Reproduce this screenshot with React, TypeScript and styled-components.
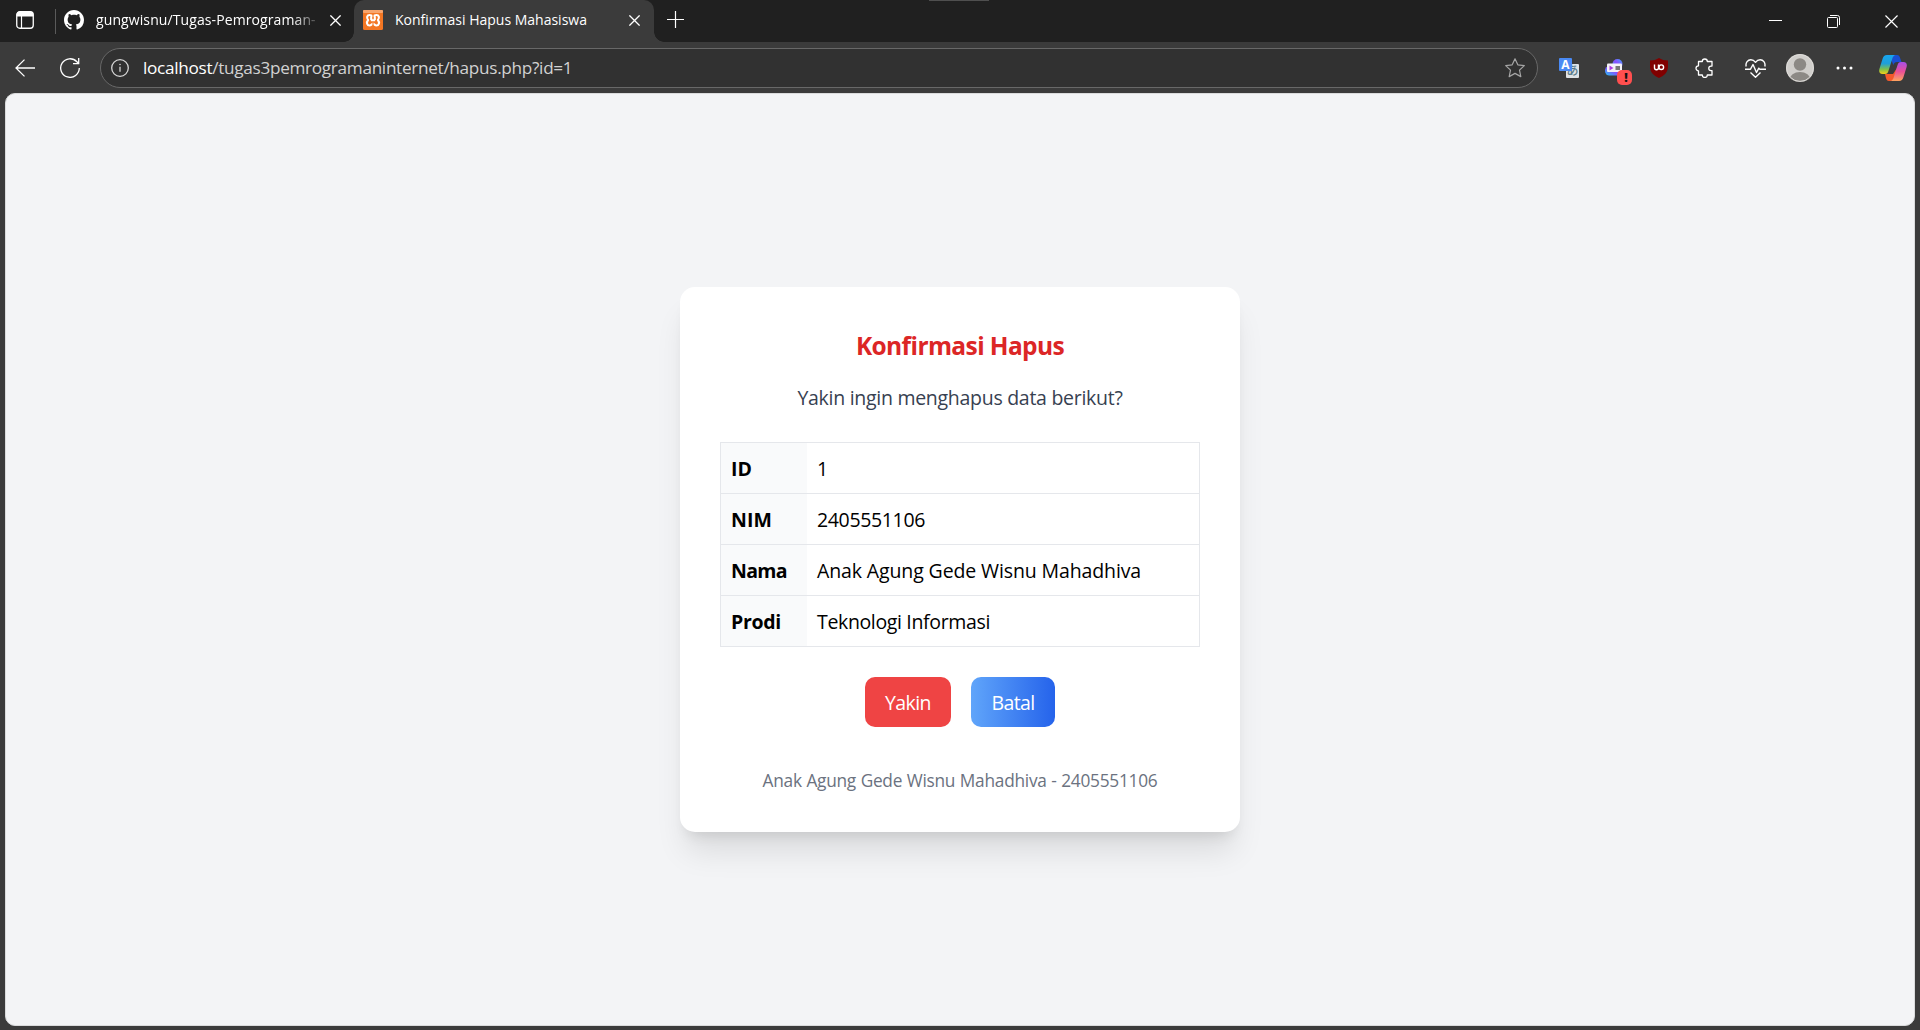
import React from "react";
import styled, { createGlobalStyle } from "styled-components";

const Global = createGlobalStyle`
  *, *::before, *::after { box-sizing: border-box; }
  body { margin: 0; background: #3b3b3b; font-family: "Open Sans", "Noto Sans", sans-serif; }
  svg { display: block; flex: none; }
`;

const Window = styled.div`
  width: 1920px;
  height: 1030px;
  display: flex;
  flex-direction: column;
  background: #3b3b3b;
  overflow: hidden;
`;

const TabStrip = styled.header`
  position: relative;
  height: 42px;
  display: flex;
  align-items: flex-start;
  background: #202020;
`;

const DragHandle = styled.span`
  position: absolute;
  top: 0;
  left: 929px;
  width: 60px;
  height: 1px;
  background: #4f4f4f;
`;

const TabActions = styled.div`
  width: 55px;
  height: 42px;
  padding: 11px 0 0 16px;
`;

const TabDivider = styled.span`
  width: 1px;
  height: 25px;
  margin-top: 9px;
  background: #5a5a5a;
`;

const Tab = styled.div<{ $active?: boolean; $width: number; $pad: string }>`
  position: relative;
  width: ${(p) => p.$width}px;
  height: 42px;
  padding: ${(p) => p.$pad};
  display: flex;
  align-items: center;
  color: #fff;
  background: ${(p) => (p.$active ? "#3b3b3b" : "transparent")};
  border-radius: 10px 10px 0 0;

  &::before, &::after {
    content: ${(p) => (p.$active ? '""' : "none")};
    position: absolute;
    bottom: 0;
    width: 10px;
    height: 10px;
  }
  &::before { left: -10px; background: radial-gradient(circle at 0 0, transparent 9.5px, #3b3b3b 10px); }
  &::after { right: -10px; background: radial-gradient(circle at 100% 0, transparent 9.5px, #3b3b3b 10px); }
`;

const TabTitle = styled.span<{ $fade?: boolean; $spacing: number }>`
  flex: 1;
  min-width: 0;
  margin: 0 8px 0 12px;
  white-space: nowrap;
  font-size: 14px;
  line-height: 20px;
  letter-spacing: ${(p) => p.$spacing}px;
  mask-image: ${(p) => (p.$fade ? "linear-gradient(to right, #000 calc(100% - 30px), transparent)" : "none")};
`;

const NewTab = styled.div`
  padding: 11px 0 0 13px;
`;

const WindowControls = styled.div`
  margin-left: auto;
  display: flex;
  gap: 45px;
  padding: 15px 22px 0 0;
`;

const Toolbar = styled.nav`
  height: 51px;
  display: flex;
  align-items: center;
  padding: 1px 13px 0 15px;
`;

const Slot = styled.span<{ $gap: number }>`
  display: flex;
  margin-left: ${(p) => p.$gap}px;
`;

const AddressBar = styled.div`
  width: 1438px;
  flex: none;
  height: 40px;
  margin-left: 20px;
  padding: 0 12px 0 10px;
  display: flex;
  align-items: center;
  justify-content: space-between;
  background: #313131;
  border: 1px solid #686868;
  border-radius: 20px;
`;

const Url = styled.span`
  flex: 1;
  margin-left: 14px;
  font-size: 17.2px;
  line-height: 24px;
  letter-spacing: -0.31px;
  color: #d2d2d2;
  b { font-weight: 400; color: #fff; }
`;

const ToolDivider = styled.span`
  width: 1px;
  height: 20px;
  margin-left: 15px;
  background: #636363;
`;

const Page = styled.main`
  flex: 1;
  margin: 0 5px 4px;
  display: flex;
  align-items: center;
  justify-content: center;
  background: #f3f4f6;
  border: 1px solid #dadbdc;
  border-radius: 10px;
`;

const Card = styled.section`
  width: 560px;
  height: 545px;
  padding: 40px;
  display: flex;
  flex-direction: column;
  align-items: center;
  background: #fff;
  border-radius: 15px;
  box-shadow: 0 25px 31.25px -6.25px rgba(0, 0, 0, 0.1), 0 10px 12.5px -7.5px rgba(0, 0, 0, 0.1);
`;

const Title = styled.h1`
  margin: 1px 0 14px;
  font-size: 24.5px;
  line-height: 35px;
  font-weight: 700;
  letter-spacing: -0.6px;
  color: #dc2626;
  white-space: nowrap;
`;

const Question = styled.p`
  margin: 6px 0 29px;
  font-size: 19.5px;
  line-height: 30px;
  letter-spacing: -0.28px;
  color: #374151;
  white-space: nowrap;
`;

const Table = styled.div`
  width: 480px;
  border: 1px solid #e5e7eb;
`;

const Row = styled.div`
  height: 51px;
  display: flex;
  font-size: 19.5px;
  line-height: 52px;
  color: #000;
  white-space: nowrap;
  border-bottom: 1px solid #e5e7eb;
  &:last-child { height: 50px; border-bottom: 0; }
`;

const Label = styled.span<{ $spacing: number }>`
  width: 86px;
  padding-left: 10px;
  font-weight: 700;
  letter-spacing: ${(p) => p.$spacing}px;
  background: #f9fafb;
`;

const Value = styled.span<{ $spacing: number }>`
  padding-left: 10px;
  letter-spacing: ${(p) => p.$spacing}px;
`;

const Actions = styled.div`
  display: flex;
  gap: 20px;
  margin-top: 30px;
`;

const Button = styled.button<{ $bg: string; $width: number }>`
  width: ${(p) => p.$width}px;
  height: 50px;
  padding: 1px 0 0;
  border: 0;
  border-radius: 10px;
  background: ${(p) => p.$bg};
  color: #fff;
  font: 400 19.5px/30px "Open Sans", "Noto Sans", sans-serif;
  letter-spacing: -0.6px;
`;

const Footer = styled.footer`
  margin-top: 41px;
  font-size: 17.3px;
  line-height: 25px;
  letter-spacing: -0.26px;
  word-spacing: 0.4px;
  color: #6b7280;
  white-space: nowrap;
`;

const data = [
  { label: "ID", value: "1", labelSpacing: 0, spacing: 0 },
  { label: "NIM", value: "2405551106", labelSpacing: 0.1, spacing: -0.35 },
  { label: "Nama", value: "Anak Agung Gede Wisnu Mahadhiva", labelSpacing: -0.7, spacing: -0.12 },
  { label: "Prodi", value: "Teknologi Informasi", labelSpacing: -0.3, spacing: -0.35 },
];

const TabsIcon = () => (
  <svg width="18" height="18" viewBox="0 0 18 18" fill="none" stroke="#fff">
    <rect x=".75" y=".75" width="16.5" height="16.5" rx="3" strokeWidth="1.3" />
    <path d="M1 5V3.5A2.5 2.5 0 0 1 3.5 1h11A2.5 2.5 0 0 1 17 3.500V5z" fill="#fff" />
    <path d="M5.500 5v12" strokeWidth="1.2" />
  </svg>
);

const GithubIcon = () => (
  <svg width="20" height="20" viewBox="0 0 16 16" fill="#fff">
    <path d="M8 0C3.58 0 0 3.58 0 8c0 3.54 2.29 6.53 5.47 7.59.4.07.55-.17.55-.38 0-.19-.01-.82-.01-1.49-2.01.37-2.53-.49-2.69-.94-.09-.23-.48-.94-.82-1.13-.28-.15-.68-.52-.01-.53.63-.01 1.08.58 1.23.82.72 1.21 1.87.87 2.33.66.07-.52.28-.87.51-1.07-1.78-.2-3.64-.89-3.64-3.95 0-.87.31-1.59.82-2.15-.08-.2-.36-1.02.08-2.12 0 0 .67-.21 2.2.82.64-.18 1.32-.27 2-.27s1.36.09 2 .27c1.53-1.04 2.2-.82 2.2-.82.44 1.1.16 1.92.08 2.12.51.56.82 1.27.82 2.15 0 3.07-1.87 3.75-3.65 3.95.29.25.54.73.54 1.48 0 1.07-.01 1.93-.01 2.2 0 .21.15.46.55.38A8.01 8.01 0 0 0 16 8c0-4.42-3.58-8-8-8z" />
  </svg>
);

const XamppIcon = () => (
  <svg width="20" height="20" viewBox="0 0 20 20">
    <rect width="20" height="20" rx="1.500" fill="#f37623" />
    <rect width="20" height="3" rx="1" fill="#f8a56d" />
    <path d="M6.600 5C8 5 8.800 6 10 6S12 5 13.400 5C15.900 5 16.800 7.800 14.900 10C17 12.500 15.900 15.500 13.400 15.500C11.800 15.500 11.300 13.900 10 13.900S8.200 15.500 6.600 15.500C4.100 15.500 3 12.500 5.100 10C3.200 7.800 4.100 5 6.600 5zM7.800 10.200h4.400M8.200 6.400v3.600M11.800 6.400v3.600" fill="none" stroke="#fff" strokeWidth="2.100" strokeLinejoin="round" />
    <path d="M10 3.500v3.800M10 13v3.500" stroke="#f37623" strokeWidth="1.100" />
  </svg>
);

const CloseIcon = ({ size = 11 }: { size?: number }) => (
  <svg width={size} height={size} viewBox="0 0 11 11" fill="none" stroke="#fff" strokeWidth={size > 11 ? 1 : 1.3}>
    <path d="M.4.4l10.200 10.200M10.600.4L.4 10.600" />
  </svg>
);

const PlusIcon = () => (
  <svg width="17" height="17" viewBox="0 0 17 17" stroke="#fff" strokeWidth="1.200">
    <path d="M8.500 0v17M0 8.500h17" />
  </svg>
);

const MinimizeIcon = () => (
  <svg width="13" height="13" viewBox="0 0 13 13" stroke="#fff"><path d="M0 5.500h13" /></svg>
);

const RestoreIcon = () => (
  <svg width="13" height="13" viewBox="0 0 13 13" fill="none" stroke="#fff">
    <rect x=".5" y="2.500" width="10" height="10" rx="1" />
    <path d="M3 .5h7.500a2 2 0 0 1 2 2V10" />
  </svg>
);

const BackIcon = () => (
  <svg width="20" height="18" viewBox="0 0 20 18" fill="none" stroke="#fff" strokeWidth="1.300">
    <path d="M20 9H1M9.500.6L1 9l8.500 8.400" />
  </svg>
);

const ReloadIcon = () => (
  <svg width="20" height="20" viewBox="0 0 20 20" fill="none" stroke="#fff" strokeWidth="1.300">
    <path d="M19.300 10a9.300 9.300 0 1 1-2.400-6.200L18.500 5.500M18.700 0v5.700h-5.700" />
  </svg>
);

const InfoIcon = () => (
  <svg width="18" height="18" viewBox="0 0 18 18" fill="none" stroke="#d6d6d6" strokeWidth="1.300">
    <circle cx="9" cy="9" r="8.300" />
    <path d="M9 7.800v5" />
    <circle cx="9" cy="5.500" r=".5" fill="#d6d6d6" strokeWidth=".6" />
  </svg>
);

const StarIcon = () => (
  <svg width="20" height="20" viewBox="0 0 20 20" fill="none" stroke="#a5a5a5" strokeWidth="1.200" strokeLinejoin="round">
    <path d="M10 .8l2.800 6 6.500.8-4.800 4.500 1.300 6.500L10 15.400l-5.800 3.200 1.300-6.500L.7 7.600l6.500-.8z" />
  </svg>
);

const TranslateGlyph = styled.span<{ $front?: boolean }>`
  position: absolute;
  left: ${(p) => (p.$front ? 0 : 7)}px;
  top: ${(p) => (p.$front ? 0 : 6)}px;
  width: 13px;
  height: ${(p) => (p.$front ? 13 : 14)}px;
  border-radius: 1px;
  display: flex;
  align-items: center;
  justify-content: center;
  background: ${(p) => (p.$front ? "#4a8af4" : "#dfe3e6")};
  color: ${(p) => (p.$front ? "#fff" : "#587a89")};
  font: ${(p) => (p.$front ? "700 12px" : "500 12px")} / 1 "Open Sans", "Noto Sans CJK JP", sans-serif;
`;

const TranslateBox = styled.span`
  position: relative;
  width: 20px;
  height: 20px;
  flex: none;
  margin-left: 21px;
`;

const BotBox = styled.span`
  position: relative;
  width: 27px;
  height: 27px;
  flex: none;
  margin: 9px 0 0 26px;
`;

const AlertBadge = styled.span`
  position: absolute;
  left: 12px;
  top: 11px;
  width: 15px;
  height: 15px;
  border-radius: 5px;
  background: #ff4f4f;
  color: #111;
  font-size: 12px;
  line-height: 16px;
  font-weight: 800;
  text-align: center;
  padding-left: 3px;
`;

const BotIcon = () => (
  <svg width="20" height="18" viewBox="0 0 20 18">
    <defs>
      <linearGradient id="bot" x1="0" y1="1" x2="1" y2="0">
        <stop offset="0" stopColor="#20c6f4" />
        <stop offset=".5" stopColor="#8a4cff" />
        <stop offset="1" stopColor="#42a5ff" />
      </linearGradient>
    </defs>
    <circle cx="12.500" cy="5" r="5" fill="url(#bot)" />
    <rect x="0" y="7" width="17" height="9.500" rx="4.500" fill="url(#bot)" />
    <rect x="2" y="4.500" width="15" height="8.500" rx="1" fill="#f4f2f8" />
    <path d="M4.500 6.500v5l4-2.500z" fill="#b03ae0" />
    <path d="M10.500 7h4.500v4h-4.500z" fill="#777" />
  </svg>
);

const ShieldIcon = () => (
  <svg width="18" height="20" viewBox="0 0 18 20">
    <path d="M9 0c2.500 1.700 5.600 2.500 9 2.500v6C18 14 14.500 17.500 9 20 3.500 17.500 0 14 0 8.500v-6C3.400 2.500 6.500 1.700 9 0z" fill="#800000" />
    <path d="M4.500 6.500v3.300a2 2 0 0 0 4 0V6.500" fill="none" stroke="#fff" strokeWidth="1.400" />
    <circle cx="11.300" cy="9.200" r="2.300" fill="none" stroke="#fff" strokeWidth="1.400" />
  </svg>
);

const PuzzleIcon = () => (
  <svg width="19" height="20" viewBox="0 0 19 20" fill="none" stroke="#fff" strokeWidth="1.300" strokeLinejoin="round">
    <path d="M3.500 3.500H7.300a2.500 2.500 0 1 1 5 0H17v4.600h-1a2.200 2.200 0 0 0 0 4.500h1v4.400h-4.700a2.500 2.500 0 1 1-5 0H3.500v-4.200a2.500 2.500 0 1 1 0-5z" />
  </svg>
);

const HeartIcon = () => (
  <svg width="21" height="19" viewBox="0 0 21 19" fill="none" stroke="#fff" strokeWidth="1.400" strokeLinejoin="round">
    <path d="M1.200 7.500C.2 3.500 3 .8 5.800.8c2 0 3.500.9 4.700 2.500C11.700 1.700 13.200.8 15.200.8c2.800 0 5.600 2.700 4.600 6.700M0 10.200h5.500L8 5.500l3.500 8 2.300-4.300 1 1H21M5.500 13.500l5 4.700 5-4.700" />
  </svg>
);

const AvatarIcon = () => (
  <svg width="28" height="28" viewBox="0 0 28 28">
    <defs><clipPath id="face"><circle cx="14" cy="14" r="14" /></clipPath></defs>
    <g clipPath="url(#face)">
      <rect width="28" height="28" fill="#d0cecb" />
      <circle cx="14" cy="10.500" r="6.200" fill="#8c8985" />
      <ellipse cx="14" cy="26" rx="10.500" ry="8" fill="#8c8985" />
    </g>
    <circle cx="14" cy="14" r="13.400" fill="none" stroke="#dddbd8" strokeWidth="1" />
  </svg>
);

const DotsIcon = () => (
  <svg width="17" height="4" viewBox="0 0 17 4" fill="#fff">
    <circle cx="2" cy="2" r="1.500" /><circle cx="8.500" cy="2" r="1.500" /><circle cx="15" cy="2" r="1.500" />
  </svg>
);

const CopilotIcon = () => (
  <svg width="28" height="26" viewBox="0 0 28 26">
    <defs>
      <linearGradient id="cpL" x1="0" y1="0" x2="0" y2="1">
        <stop offset="0" stopColor="#17a5f0" /><stop offset=".45" stopColor="#1f9fd8" />
        <stop offset=".75" stopColor="#7fc04a" /><stop offset="1" stopColor="#f5d018" />
      </linearGradient>
      <linearGradient id="cpR" x1="0" y1="0" x2="0" y2="1">
        <stop offset="0" stopColor="#a74fe8" /><stop offset=".5" stopColor="#ea4f98" /><stop offset="1" stopColor="#ffa45e" />
      </linearGradient>
    </defs>
    <path d="M10 0h8c2 0 2.600 1.300 3.200 3.200L22.500 7H18c-2 0-3 1-3.600 3z" fill="#1a4fd2" />
    <path d="M6 19h8l4-6-2 9c-.7 2.500-1.600 4-4 4H10c-2 0-2.700-1.500-3.200-3.400z" fill="#f4592b" />
    <path d="M8 0h8.500c-2 .5-2.700 2-3.300 4L9.600 15.500C8.900 18 8 19 6 19H3.500C.5 19-.3 16.700.4 14L3.500 4C4.300 1.300 5.500 0 8 0z" fill="url(#cpL)" />
    <path d="M20 26h-8.500c2-.5 2.700-2 3.300-4l3.600-11.500C19.100 8 20 7 22 7h2.500c3 0 3.800 2.300 3.100 5l-3.100 10c-.8 2.700-2 4-4.500 4z" fill="url(#cpR)" />
  </svg>
);

export default function App() {
  return (
    <Window>
      <Global />
      <TabStrip>
        <DragHandle />
        <TabActions><TabsIcon /></TabActions>
        <TabDivider />
        <Tab $width={298} $pad="0 13px 2px 8px">
          <GithubIcon />
          <TabTitle $fade $spacing={0.1}>gungwisnu/Tugas-Pemrograman-</TabTitle>
          <CloseIcon />
        </Tab>
        <Tab $active $width={300} $pad="0 14px 2px 9px">
          <XamppIcon />
          <TabTitle $spacing={0}>Konfirmasi Hapus Mahasiswa</TabTitle>
          <CloseIcon />
        </Tab>
        <NewTab><PlusIcon /></NewTab>
        <WindowControls>
          <MinimizeIcon />
          <RestoreIcon />
          <CloseIcon size={13} />
        </WindowControls>
      </TabStrip>
      <Toolbar>
        <BackIcon />
        <Slot $gap={25}><ReloadIcon /></Slot>
        <AddressBar>
          <InfoIcon />
          <Url><b>localhost</b>/tugas3pemrogramaninternet/hapus.php?id=1</Url>
          <StarIcon />
        </AddressBar>
        <TranslateBox>
          <TranslateGlyph>あ</TranslateGlyph>
          <TranslateGlyph $front>A</TranslateGlyph>
        </TranslateBox>
        <BotBox>
          <BotIcon />
          <AlertBadge>!</AlertBadge>
        </BotBox>
        <Slot $gap={18}><ShieldIcon /></Slot>
        <Slot $gap={27}><PuzzleIcon /></Slot>
        <ToolDivider />
        <Slot $gap={16}><HeartIcon /></Slot>
        <Slot $gap={20}><AvatarIcon /></Slot>
        <Slot $gap={22}><DotsIcon /></Slot>
        <Slot $gap={26}><CopilotIcon /></Slot>
      </Toolbar>
      <Page>
        <Card>
          <Title>Konfirmasi Hapus</Title>
          <Question>Yakin ingin menghapus data berikut?</Question>
          <Table>
            {data.map((row) => (
              <Row key={row.label}>
                <Label $spacing={row.labelSpacing}>{row.label}</Label>
                <Value $spacing={row.spacing}>{row.value}</Value>
              </Row>
            ))}
          </Table>
          <Actions>
            <Button $bg="#ef4444" $width={86}>Yakin</Button>
            <Button $bg="linear-gradient(to right, #60a5fa, #2563eb)" $width={84}>Batal</Button>
          </Actions>
          <Footer>Anak Agung Gede Wisnu Mahadhiva - 2405551106</Footer>
        </Card>
      </Page>
    </Window>
  );
}
